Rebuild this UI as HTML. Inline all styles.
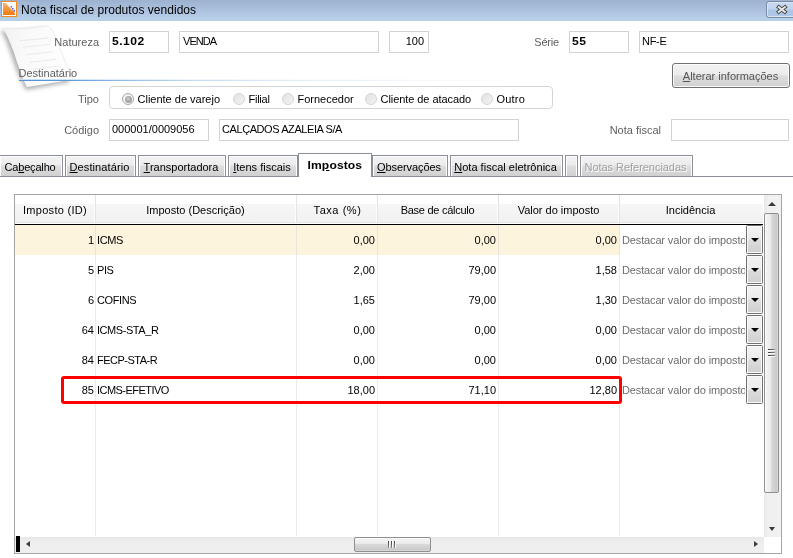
<!DOCTYPE html>
<html>
<head>
<meta charset="utf-8">
<title>Nota fiscal de produtos vendidos</title>
<style>
html,body{margin:0;padding:0;}
body{will-change:transform;width:793px;height:558px;background:#fff;position:relative;overflow:hidden;font-family:"Liberation Sans",sans-serif;font-size:11px;color:#000;}
.abs{position:absolute;}
#titlebar{left:0;top:0;width:793px;height:21px;background:linear-gradient(#9db2cf 0%,#a2b7d4 15%,#adc3df 55%,#b8cfe9 90%,#b3d1e9 100%);}
#title{left:21px;letter-spacing:0.03px;top:3px;font-size:12px;line-height:14px;color:#000;white-space:nowrap;}
.lbl{color:#606060;white-space:nowrap;text-align:right;font-size:11px;line-height:13px;}
.inp{box-sizing:border-box;border:1px solid #d2d2d2;background:#fff;height:22px;line-height:18px;padding-left:2px;white-space:nowrap;font-size:11px;overflow:hidden;}
.b{font-weight:bold;padding-left:2px;}
.bx{display:inline-block;transform:scaleX(1.1);letter-spacing:0.45px;transform-origin:0 50%;}
.tab{box-sizing:border-box;top:155px;height:22px;border:1px solid #8b8f97;border-bottom:1px solid #8b8f97;box-shadow:inset 1px 1px 0 #fcfcfc,inset -1px 0 0 #fcfcfc;background:linear-gradient(#f3f3f3 0%,#ececec 45%,#dedede 50%,#d0d0d0 100%);font-size:11px;line-height:23px;text-align:center;white-space:nowrap;padding-right:2px;}
.radio{width:10px;height:10px;border-radius:50%;border:1px solid #d3d3d3;background:linear-gradient(135deg,#e2e2e2 0%,#ececec 60%,#f4f4f4 100%);box-sizing:content-box;}
.rl{font-size:11px;line-height:13px;white-space:nowrap;color:#000;top:93px;}
.hd{top:196px;height:28px;line-height:28px;text-align:center;font-size:11px;white-space:nowrap;box-sizing:border-box;}
.cell{height:30px;line-height:30px;font-size:11px;white-space:nowrap;}
.up{letter-spacing:-0.7px;}
.r{text-align:right;}
.vline{width:1px;background:rgba(205,205,220,0.42);top:225px;height:311px;}
.hsep{top:195px;width:1px;height:28px;background:#e4e4e6;box-shadow:-1px 0 0 #fdfdfd;}
.dd{left:746px;width:17px;height:29px;box-sizing:border-box;border:1px solid #6f6f6f;border-radius:1.5px;box-shadow:inset 0 0 0 1px #fafafa;background:linear-gradient(#f3f3f3 0%,#ebebeb 48%,#dddddd 52%,#cfcfcf 100%);}
.dd:after{content:"";position:absolute;left:3.5px;top:12px;border-left:4px solid transparent;border-right:4px solid transparent;border-top:4px solid #000;}
.inc{left:622px;width:123px;letter-spacing:-0.14px;color:#6d6d6d;overflow:hidden;}
</style>
</head>
<body>
<!-- title bar -->
<div id="titlebar" class="abs"></div>
<svg class="abs" style="left:1px;top:1px" width="16" height="16" viewBox="0 0 16 16">
  <defs><linearGradient id="og" x1="0" y1="0" x2="0" y2="1"><stop offset="0" stop-color="#f9b26c"/><stop offset="1" stop-color="#f07a0e"/></linearGradient></defs>
  <rect x="0" y="0" width="16" height="16" fill="#f58a1f"/>
  <rect x="1" y="1" width="14" height="14" fill="#fff"/>
  <path d="M2 2 L4.5 2 L13.5 11.5 L14 14 L2 14 Z" fill="url(#og)"/>
  <rect x="9.5" y="5" width="1.6" height="1.6" fill="#6a6fd0"/>
  <rect x="11" y="7" width="1.6" height="1.6" fill="#5a5fcb"/>
  <rect x="12.3" y="9" width="1.7" height="1.8" fill="#6a6fd0"/>
</svg>
<div id="title" class="abs">Nota fiscal de produtos vendidos</div>
<!-- close button -->
<div class="abs" style="left:766px;top:1px;width:30px;height:17px;box-sizing:border-box;border:1px solid #7a8aa3;border-radius:3px;box-shadow:inset 0 0 0 1px #dbe6f5;background:linear-gradient(#c6d9f0 0%,#c1d5ee 48%,#abc5e6 52%,#b0c8e8 100%);"></div>
<svg class="abs" style="left:775px;top:4px" width="14" height="11" viewBox="0 0 14 11"><path d="M3.7 3.1 L9.9 7.9 M9.9 3.1 L3.7 7.9" stroke="#474747" stroke-width="3.8" stroke-linecap="square"/><path d="M3.7 3.1 L9.9 7.9 M9.9 3.1 L3.7 7.9" stroke="#e9e9e9" stroke-width="1.9" stroke-linecap="square"/></svg>

<!-- paper decoration -->
<svg class="abs" style="left:0;top:21px" width="90" height="80" viewBox="0 21 90 80">
  <defs>
    <linearGradient id="pg" x1="0" y1="0" x2="1" y2="0.25"><stop offset="0" stop-color="#f1f1f1"/><stop offset="0.3" stop-color="#f8f8f8"/><stop offset="0.6" stop-color="#fbfbfb"/><stop offset="1" stop-color="#fefefe"/></linearGradient>
    <filter id="bl" x="-30%" y="-30%" width="160%" height="160%"><feGaussianBlur stdDeviation="1.9"/></filter>
  </defs>
  <path d="M0.5 30.5 Q24 31 45 28 C51 32 54 44 59 56 C62 64 66 73 70 82 L26 90 C20 80 14 64 10.5 53 C7.5 44 4.5 36 0.5 30.5 Z" fill="#a9a9a9" filter="url(#bl)" opacity="0.9"/>
  <path d="M2.7 29 Q25 29.5 48.4 26 C54 30 57 42 61.8 53.6 C65 62 69 71 73 79.5 L27 87 C22 78 17 62 13.4 51 C10 42 7 34 2.7 29 Z" fill="url(#pg)"/>
  <path d="M2.7 29 Q25 29.5 48.4 26 C54 30 57 42 61.8 53.6 C65 62 69 71 73 79.5" fill="none" stroke="#e6e6e6" stroke-width="0.7"/>
  <path d="M19.5 40.8 L47.7 38.1 M22.8 47.3 L50.4 44.2 M25.5 54.7 L52.4 51.8 M29.6 62.3 L55.8 59.4 M33 69.2 L57.8 66.3" stroke="#ebebeb" stroke-width="1.1"/>
</svg>

<!-- row 1 -->
<div class="abs lbl" style="left:30px;width:69px;top:36px;">Natureza</div>
<div class="abs inp b" style="left:109px;top:31px;width:60px;"><span class="bx">5.102</span></div>
<div class="abs inp" style="left:179px;top:31px;width:200px;padding-left:3px;letter-spacing:-0.95px;">VENDA</div>
<div class="abs inp" style="left:389px;top:31px;width:40px;text-align:right;padding-left:0;padding-right:4px;">100</div>
<div class="abs lbl" style="left:500px;width:59px;top:36px;letter-spacing:-0.2px;">Série</div>
<div class="abs inp b" style="left:569px;top:31px;width:60px;"><span class="bx">55</span></div>
<div class="abs inp" style="left:639px;top:31px;width:150px;letter-spacing:-0.3px;">NF-E</div>

<!-- Destinatario -->
<div class="abs lbl" style="left:18.5px;top:67px;text-align:left;">Destinatário</div>
<div class="abs" style="left:19px;top:79px;width:500px;height:1px;background:linear-gradient(90deg,#c4dff6 0%,#cde4f7 10%,#e0eefa 20%,#f0f6fc 35%,#f9fbfe 55%,#ffffff 100%);"></div>
<div class="abs" style="left:19px;top:80px;width:502px;height:1px;background:linear-gradient(90deg,#5590d2 0%,#5f98d6 10%,#8db9e5 20%,#c3dbf3 35%,#e3eef9 55%,#ffffff 100%);"></div>

<!-- button -->
<div class="abs" style="left:672px;top:63px;width:118px;height:25px;box-sizing:border-box;border:1px solid #707070;border-radius:3px;background:linear-gradient(#f2f2f2 0%,#ebebeb 48%,#dddddd 52%,#d1d1d1 100%);box-shadow:inset 0 0 0 1px #fafafa;text-align:center;line-height:25px;font-size:11px;padding-right:1px;color:#555;white-space:nowrap;"><u>A</u>lterar informações</div>

<!-- Tipo -->
<div class="abs lbl" style="left:30px;width:69px;top:93px;">Tipo</div>
<div class="abs" style="left:109px;top:86px;width:444px;height:23px;box-sizing:border-box;border:1px solid #d5d5d5;border-radius:4px;"></div>
<div class="abs radio" style="left:122px;top:93px;border-color:#a9a9a9;background:#f3f3f3;"></div>
<div class="abs" style="left:124.5px;top:95.5px;width:7px;height:7px;border-radius:50%;background:radial-gradient(circle at 45% 40%,#cfcfcf 0%,#a8a8a8 45%,#989898 100%);"></div>
<div class="abs rl" style="left:137.5px;">Cliente de varejo</div>
<div class="abs radio" style="left:233px;top:93px;"></div>
<div class="abs rl" style="left:248.5px;letter-spacing:-0.25px;">Filial</div>
<div class="abs radio" style="left:282px;top:93px;"></div>
<div class="abs rl" style="left:297.5px;">Fornecedor</div>
<div class="abs radio" style="left:365px;top:93px;"></div>
<div class="abs rl" style="left:380.5px;letter-spacing:-0.06px;">Cliente de atacado</div>
<div class="abs radio" style="left:481px;top:93px;"></div>
<div class="abs rl" style="left:496.5px;letter-spacing:0.2px;">Outro</div>

<!-- Codigo -->
<div class="abs lbl" style="left:30px;width:69px;top:124px;">Código</div>
<div class="abs inp" style="left:109px;top:119px;width:100px;">000001/0009056</div>
<div class="abs inp" style="left:219px;top:119px;width:300px;letter-spacing:-0.42px;">CALÇADOS AZALEIA S/A</div>
<div class="abs lbl" style="left:590px;width:71px;top:124px;">Nota fiscal</div>
<div class="abs inp" style="left:671px;top:119px;width:118px;"></div>

<!-- tabs -->
<div class="abs" style="left:0;top:176px;width:793px;height:1px;background:#8b8f97;"></div>
<div class="abs tab" style="left:-1px;width:64px;letter-spacing:-0.17px;">Ca<u>b</u>eçalho</div>
<div class="abs tab" style="left:65px;width:71px;letter-spacing:0.1px;"><u>D</u>estinatário</div>
<div class="abs tab" style="left:138px;width:88px;letter-spacing:0px;"><u>T</u>ransportadora</div>
<div class="abs tab" style="left:228px;width:70px;letter-spacing:0px;"><u>I</u>tens fiscais</div>
<div class="abs tab" style="left:372px;width:76px;letter-spacing:-0.07px;"><u>O</u>bservações</div>
<div class="abs tab" style="left:450px;width:113px;letter-spacing:0.02px;"><u>N</u>ota fiscal eletrônica</div>
<div class="abs tab" style="left:565px;width:13px;"></div>
<div class="abs tab" style="left:580px;width:113px;color:#a2a2a2;letter-spacing:-0.04px;text-shadow:1px 1px 0 #ffffff;">Notas Referenciadas</div>
<div class="abs" style="left:298px;top:153px;width:74px;height:24px;box-sizing:border-box;border:1px solid #8b8f97;border-bottom:none;background:#fff;font-weight:bold;font-size:11px;text-align:center;line-height:23px;white-space:nowrap;padding-right:1px;"><span class="bx" style="transform-origin:50% 50%;transform:scaleX(1.1);letter-spacing:0.1px">Im<u>p</u>ostos</span></div>

<!-- grid -->
<div class="abs" style="left:14px;top:194px;width:768px;height:360px;box-sizing:border-box;border:1px solid #a5a5a5;background:#fff;"></div>
<!-- header -->
<div class="abs" style="left:15px;top:195px;width:748px;height:29px;background:linear-gradient(#ffffff 0px,#ffffff 8.5px,#f6f6f6 9.5px,#f2f2f2 26.5px,#e4e4e4 27px,#e4e4e4 27.6px,#ffffff 28px,#ffffff 29px);"></div>
<div class="abs" style="left:15px;top:224px;width:748px;height:1px;background:#000;"></div>
<div class="abs hd" style="left:15px;width:80px;letter-spacing:0.3px;">Imposto (ID)</div>
<div class="abs hd" style="left:95px;width:201px;">Imposto (Descrição)</div>
<div class="abs hd" style="left:297px;width:81px;letter-spacing:0.55px;">Taxa (%)</div>
<div class="abs hd" style="left:377px;width:121px;letter-spacing:-0.27px;">Base de cálculo</div>
<div class="abs hd" style="left:498px;width:121px;">Valor do imposto</div>
<div class="abs hd" style="left:618px;width:145px;">Incidência</div>
<div class="abs hsep" style="left:95px;"></div>
<div class="abs hsep" style="left:296px;"></div>
<div class="abs hsep" style="left:377px;"></div>
<div class="abs hsep" style="left:498px;"></div>
<div class="abs hsep" style="left:619px;"></div>

<!-- selected row bg -->
<div class="abs" style="left:15px;top:225px;width:605px;height:30px;background:#fdf4dd;"></div>
<!-- column lines -->
<div class="abs vline" style="left:95px;"></div>
<div class="abs vline" style="left:296px;"></div>
<div class="abs vline" style="left:377px;"></div>
<div class="abs vline" style="left:498px;"></div>
<div class="abs vline" style="left:619px;"></div>

<div class="abs cell r" style="left:15px;width:79px;top:225px">1</div>
<div class="abs cell" style="left:97px;top:225px;letter-spacing:-0.35px">ICMS</div>
<div class="abs cell r" style="left:297px;width:78px;top:225px">0,00</div>
<div class="abs cell r" style="left:378px;width:118px;top:225px">0,00</div>
<div class="abs cell r" style="left:499px;width:118px;top:225px">0,00</div>
<div class="abs cell inc" style="top:225px">Destacar valor do imposto</div>
<div class="abs dd" style="top:225px"></div>
<div class="abs cell r" style="left:15px;width:79px;top:255px">5</div>
<div class="abs cell" style="left:97px;top:255px;letter-spacing:-0.4px">PIS</div>
<div class="abs cell r" style="left:297px;width:78px;top:255px">2,00</div>
<div class="abs cell r" style="left:378px;width:118px;top:255px">79,00</div>
<div class="abs cell r" style="left:499px;width:118px;top:255px">1,58</div>
<div class="abs cell inc" style="top:255px">Destacar valor do imposto</div>
<div class="abs dd" style="top:255px"></div>
<div class="abs cell r" style="left:15px;width:79px;top:285px">6</div>
<div class="abs cell" style="left:97px;top:285px;letter-spacing:-0.37px">COFINS</div>
<div class="abs cell r" style="left:297px;width:78px;top:285px">1,65</div>
<div class="abs cell r" style="left:378px;width:118px;top:285px">79,00</div>
<div class="abs cell r" style="left:499px;width:118px;top:285px">1,30</div>
<div class="abs cell inc" style="top:285px">Destacar valor do imposto</div>
<div class="abs dd" style="top:285px"></div>
<div class="abs cell r" style="left:15px;width:79px;top:315px">64</div>
<div class="abs cell" style="left:97px;top:315px;letter-spacing:-0.44px">ICMS-STA_R</div>
<div class="abs cell r" style="left:297px;width:78px;top:315px">0,00</div>
<div class="abs cell r" style="left:378px;width:118px;top:315px">0,00</div>
<div class="abs cell r" style="left:499px;width:118px;top:315px">0,00</div>
<div class="abs cell inc" style="top:315px">Destacar valor do imposto</div>
<div class="abs dd" style="top:315px"></div>
<div class="abs cell r" style="left:15px;width:79px;top:345px">84</div>
<div class="abs cell" style="left:97px;top:345px;letter-spacing:-0.5px">FECP-STA-R</div>
<div class="abs cell r" style="left:297px;width:78px;top:345px">0,00</div>
<div class="abs cell r" style="left:378px;width:118px;top:345px">0,00</div>
<div class="abs cell r" style="left:499px;width:118px;top:345px">0,00</div>
<div class="abs cell inc" style="top:345px">Destacar valor do imposto</div>
<div class="abs dd" style="top:345px"></div>
<div class="abs cell r" style="left:15px;width:79px;top:375px">85</div>
<div class="abs cell" style="left:97px;top:375px;letter-spacing:-0.54px">ICMS-EFETIVO</div>
<div class="abs cell r" style="left:297px;width:78px;top:375px">18,00</div>
<div class="abs cell r" style="left:378px;width:118px;top:375px">71,10</div>
<div class="abs cell r" style="left:499px;width:118px;top:375px">12,80</div>
<div class="abs cell inc" style="top:375px">Destacar valor do imposto</div>
<div class="abs dd" style="top:375px"></div>

<!-- vertical scrollbar -->
<div class="abs" style="left:763px;top:195px;width:18px;height:342px;background:linear-gradient(90deg,#ffffff 0px,#ffffff 1px,#e8e8e8 1px,#f0f0f0 5px,#f1f1f1 18px);"></div>
<div class="abs" style="left:768px;top:202px;border-left:4px solid transparent;border-right:4px solid transparent;border-bottom:4px solid #3a3a3a;"></div>
<div class="abs" style="left:768.5px;top:527px;border-left:3.5px solid transparent;border-right:3.5px solid transparent;border-top:4px solid #3a3a3a;"></div>
<div class="abs" style="left:764px;top:213px;width:15px;height:280px;box-sizing:border-box;border:1px solid #8f8f8f;border-radius:2px;box-shadow:inset 1px 0 0 #fbfbfb,inset -1px 0 0 #d6d6d6;background:linear-gradient(90deg,#f5f5f5 0%,#ececec 42%,#d9d9d9 50%,#c6c6c6 100%);"></div>
<div class="abs" style="left:768px;top:349px;width:7px;height:1px;background:linear-gradient(90deg,#3c3c3c,#8a8a8a);box-shadow:0 1px 0 rgba(255,255,255,0.8);"></div>
<div class="abs" style="left:768px;top:352px;width:7px;height:1px;background:linear-gradient(90deg,#3c3c3c,#8a8a8a);box-shadow:0 1px 0 rgba(255,255,255,0.8);"></div>
<div class="abs" style="left:768px;top:355px;width:7px;height:1px;background:linear-gradient(90deg,#3c3c3c,#8a8a8a);box-shadow:0 1px 0 rgba(255,255,255,0.8);"></div>

<!-- horizontal scrollbar -->
<div class="abs" style="left:15px;top:537px;width:749px;height:16px;background:linear-gradient(#e7e7e7 0px,#eeeeee 5px,#efefef 16px);"></div>
<div class="abs" style="left:16px;top:536px;width:4px;height:16px;background:#000;"></div>
<div class="abs" style="left:26px;top:541px;border-top:3.5px solid transparent;border-bottom:3.5px solid transparent;border-right:4px solid #3a3a3a;"></div>
<div class="abs" style="left:754px;top:541px;border-top:3.5px solid transparent;border-bottom:3.5px solid transparent;border-left:4px solid #3a3a3a;"></div>
<div class="abs" style="left:354px;top:537px;width:77px;height:15px;box-sizing:border-box;border:1px solid #8f8f8f;border-radius:2px;box-shadow:inset 0 1px 0 #fbfbfb,inset 0 -1px 0 #d6d6d6;background:linear-gradient(#f5f5f5 0%,#ececec 42%,#d9d9d9 50%,#c6c6c6 100%);"></div>
<div class="abs" style="left:388px;top:541px;width:1px;height:7px;background:linear-gradient(#3c3c3c,#8a8a8a);box-shadow:1px 0 0 rgba(255,255,255,0.8);"></div>
<div class="abs" style="left:391px;top:541px;width:1px;height:7px;background:linear-gradient(#3c3c3c,#8a8a8a);box-shadow:1px 0 0 rgba(255,255,255,0.8);"></div>
<div class="abs" style="left:394px;top:541px;width:1px;height:7px;background:linear-gradient(#3c3c3c,#8a8a8a);box-shadow:1px 0 0 rgba(255,255,255,0.8);"></div>

<!-- red highlight -->
<div class="abs" style="left:61px;top:376px;width:561px;height:28px;box-sizing:border-box;border:3px solid #fe0000;border-radius:3px;"></div>
</body>
</html>
